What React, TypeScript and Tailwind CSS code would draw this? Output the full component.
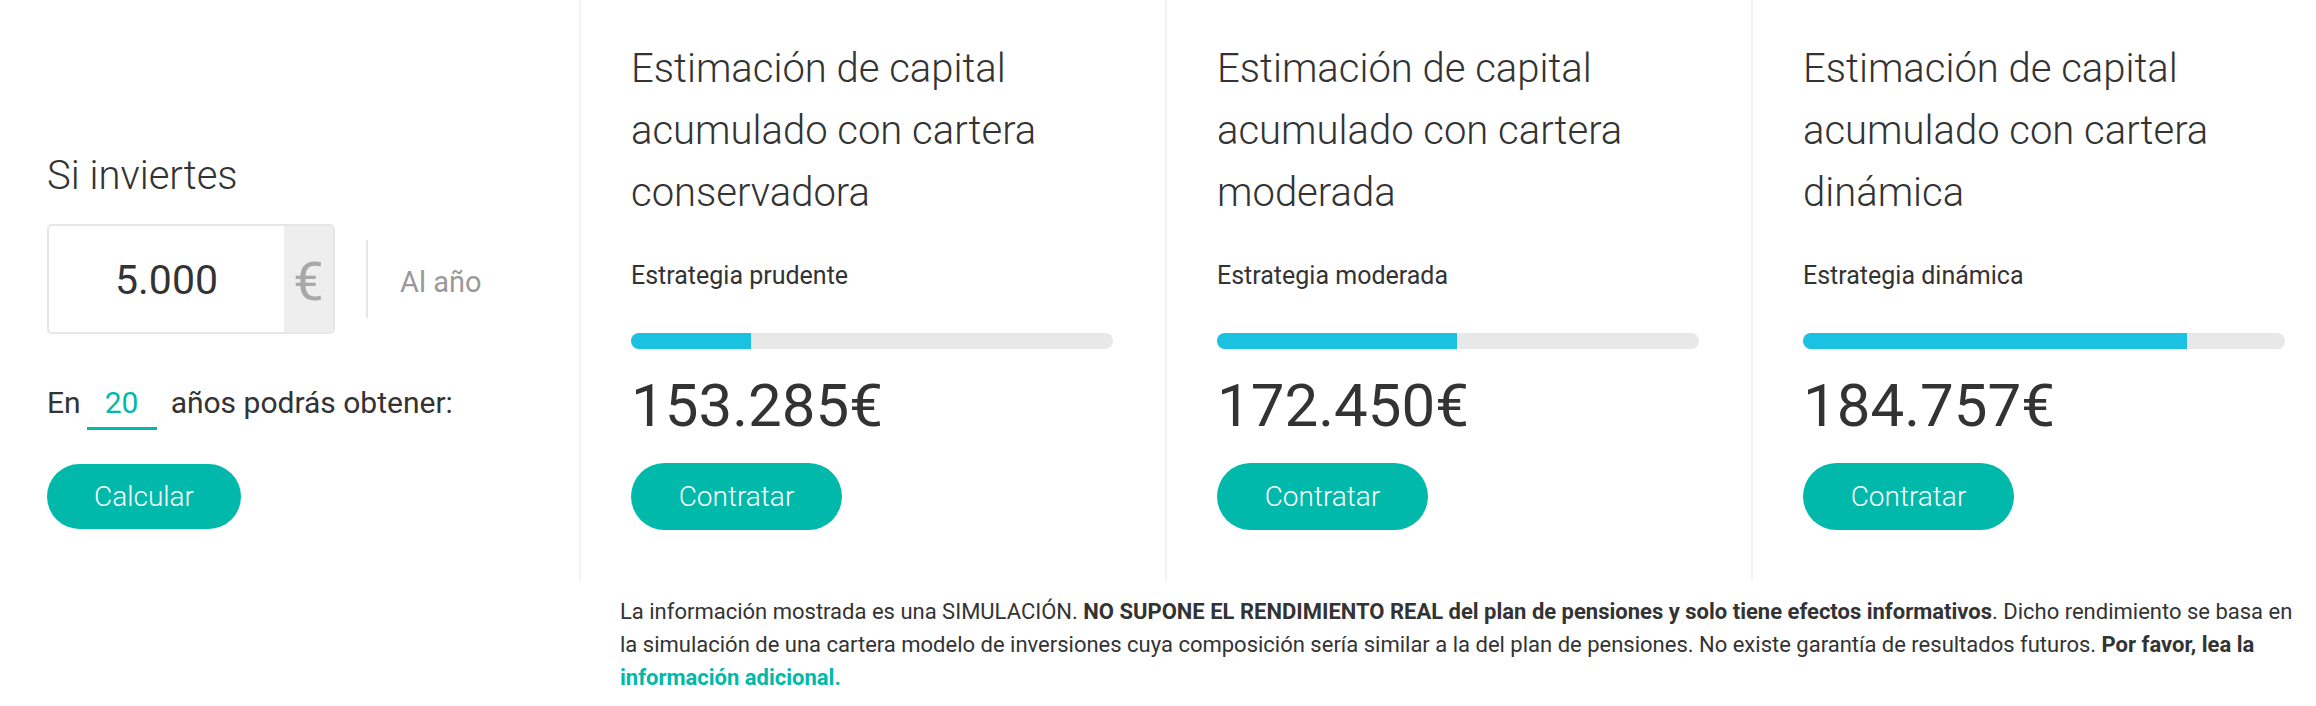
import React from 'react';

const carteras = [
  { name: 'conservadora', strategy: 'Estrategia prudente', pct: 24.8, amount: '153.285€' },
  { name: 'moderada', strategy: 'Estrategia moderada', pct: 49.8, amount: '172.450€' },
  { name: 'dinámica', strategy: 'Estrategia dinámica', pct: 79.7, amount: '184.757€' },
];

function CarteraColumn({ name, strategy, pct, amount }: (typeof carteras)[number]) {
  return (
    <div className="w-[586px] shrink-0 border-l-2 border-[#f3f3f3] pl-[50px] pr-[52px] pt-[38px] pb-[51px]">
      <h2 className="text-[40px] font-light leading-[62px] text-[#333]">
        Estimación de capital
        <br />
        acumulado con cartera
        <br />
        {name}
      </h2>
      <p className="mt-[34px] text-[25px] leading-[36px] text-[#333]">{strategy}</p>
      <div className="mt-[39px] h-[16px] w-full overflow-hidden rounded-full bg-[#e8e8e8]">
        <div className="h-full bg-[#1bc1e0]" style={{ width: `${pct}%` }} />
      </div>
      <div className="mt-[21px] text-[60px] leading-[72px] text-[#333]">{amount}</div>
      <button className="mt-[21px] h-[67px] w-[211px] rounded-full bg-[#00b9aa] text-[28px] font-light text-white">
        Contratar
      </button>
    </div>
  );
}

export default function App() {
  return (
    <div className="flex h-[706px] w-[2316px] overflow-hidden bg-white font-['Roboto',sans-serif] text-[#333]">
      <div className="w-[579px] shrink-0 pl-[47px] pt-[152px]">
        <h1 className="text-[40px] font-light leading-[48px]">Si inviertes</h1>
        <div className="mt-[24px] flex items-center">
          <div className="flex h-[110px] w-[288px] overflow-hidden rounded-[5px] border-2 border-[#e6e6e6]">
            <div className="flex flex-1 items-center justify-center pt-[3px] text-[41px]">5.000</div>
            <div className="flex w-[49px] items-center justify-center bg-[#eeeeee] pt-[4px] text-[54px] text-[#a8a8a8]">
              €
            </div>
          </div>
          <div className="ml-[31px] h-[78px] w-[2px] bg-[#e6e6e6]" />
          <span className="ml-[32px] pt-[8px] text-[29px] text-[#999]">Al año</span>
        </div>
        <div className="mt-[49px] flex items-baseline text-[30px] leading-[40px]">
          <span>En</span>
          <span className="ml-[6px] w-[70px] border-b-[3px] border-[#00b9aa] pb-[4px] text-center text-[#00b9aa]">20</span>
          <span className="ml-[14px]">años podrás obtener:</span>
        </div>
        <button className="mt-[34px] h-[65px] w-[194px] rounded-full bg-[#00b9aa] text-[28px] font-light text-white">
          Calcular
        </button>
      </div>
      <div className="flex flex-col">
        <div className="flex">
          {carteras.map((c) => (
            <CarteraColumn key={c.name} {...c} />
          ))}
        </div>
        <p className="pl-[41px] pt-[14px] text-[22px] leading-[33px] text-[#333]">
          La información mostrada es una SIMULACIÓN. <b>NO SUPONE EL RENDIMIENTO REAL del plan de pensiones y solo tiene efectos informativos</b>. Dicho rendimiento se basa en
          <br />
          la simulación de una cartera modelo de inversiones cuya composición sería similar a la del plan de pensiones. No existe garantía de resultados futuros. <b>Por favor, lea la</b>
          <br />
          <a className="font-bold text-[#00b9aa]">información adicional.</a>
        </p>
      </div>
    </div>
  );
}
